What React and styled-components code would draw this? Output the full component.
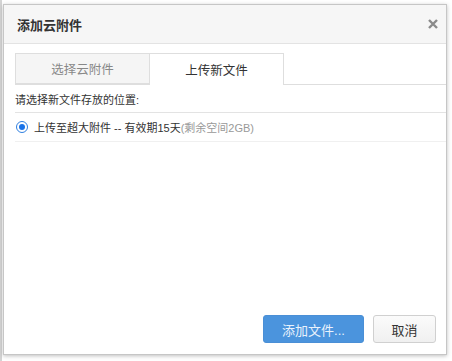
import React from 'react';
import styled, { createGlobalStyle } from 'styled-components';

const GlobalStyle = createGlobalStyle`
  html, body {
    margin: 0;
    padding: 0;
    background: #ffffff;
    font-family: "Liberation Sans", "Noto Sans CJK SC", sans-serif;
  }
`;

const Page = styled.div`
  padding: 4px 5px 6px 1px;
  width: 452px;
  height: 361px;
  box-sizing: border-box;
  border-left: 2px solid #d4d4d4;
`;

const Dialog = styled.div`
  height: 351px;
  box-sizing: border-box;
  border: 1px solid #c6c6c6;
  box-shadow: 0 1px 4px rgba(0, 0, 0, 0.25);
  background: #fff;
  display: flex;
  flex-direction: column;
`;

const Header = styled.div`
  height: 38px;
  background: #f6f6f6;
  border-bottom: 1px solid #e3e3e3;
  display: flex;
  align-items: center;
  justify-content: space-between;
  padding: 0 8px 0 13px;
`;

const Title = styled.div`
  font-size: 13px;
  font-weight: bold;
  color: #333;
`;

const Close = styled.svg`
  width: 10px;
  height: 10px;
  margin-top: -1px;
`;

const Body = styled.div`
  flex: 1;
  padding-top: 9px;
`;

const TabBar = styled.div`
  display: flex;
  margin-left: 11px;
  border-bottom: 1px solid #dedede;
`;

const Tab = styled.div`
  width: ${p => p.$w}px;
  box-sizing: border-box;
  display: flex;
  align-items: center;
  justify-content: center;
  font-size: 12.5px;
  border: 1px solid #dedede;
  border-left: ${p => (p.$first ? '1px solid #dedede' : 'none')};
  background: ${p => (p.$active ? '#fff' : '#f5f5f5')};
  color: ${p => (p.$active ? '#333' : '#888')};
  margin-bottom: ${p => (p.$active ? '-1px' : '0')};
  height: ${p => (p.$active ? '32px' : '31px')};
  border-bottom: ${p => (p.$active ? 'none' : '1px solid #dedede')};
`;

const Content = styled.div`
  margin-left: 11px;
`;

const Label = styled.div`
  font-size: 11px;
  color: #333;
  height: 27px;
  line-height: 31px;
  border-bottom: 1px solid #e3e3e3;
`;

const OptionRow = styled.label`
  display: flex;
  align-items: center;
  height: 28px;
  font-size: 11px;
  color: #333;
  border-bottom: 1px solid #f0f0f0;
`;

const Radio = styled.span`
  width: 12px;
  height: 12px;
  box-sizing: border-box;
  border-radius: 50%;
  border: 1px solid #2f7fe0;
  margin: 0 6px 0 1px;
  display: flex;
  align-items: center;
  justify-content: center;
  &::after {
    content: '';
    width: 6px;
    height: 6px;
    border-radius: 50%;
    background: #1a73e8;
  }
`;

const Muted = styled.span`
  color: #999;
`;

const Footer = styled.div`
  display: flex;
  justify-content: flex-end;
  gap: 9px;
  padding: 0 10px 11px 0;
`;

const Button = styled.button`
  height: 28px;
  box-sizing: border-box;
  padding: 0;
  width: ${p => p.$w}px;
  font-family: inherit;
  font-size: 13px;
  border-radius: 3px;
  border: 1px solid ${p => (p.$primary ? '#4a8fd6' : '#d0d0d0')};
  background: ${p => (p.$primary ? '#4b94dd' : 'linear-gradient(#fbfbfb, #f0f0f0)')};
  color: ${p => (p.$primary ? '#e9f2fc' : '#333')};
`;

export default function App() {
  return (
    <Page>
      <GlobalStyle />
      <Dialog>
        <Header>
          <Title>添加云附件</Title>
          <Close viewBox="0 0 10 10">
            <path d="M1 1L9 9M9 1L1 9" stroke="#8a8a8a" strokeWidth="2.4" />
          </Close>
        </Header>
        <Body>
          <TabBar>
            <Tab $w={135} $first>选择云附件</Tab>
            <Tab $w={134} $active>上传新文件</Tab>
          </TabBar>
          <Content>
            <Label>请选择新文件存放的位置:</Label>
            <OptionRow>
              <Radio />
              上传至超大附件 -- 有效期15天<Muted>(剩余空间2GB)</Muted>
            </OptionRow>
          </Content>
        </Body>
        <Footer>
          <Button $w={101} $primary>添加文件...</Button>
          <Button $w={63}>取消</Button>
        </Footer>
      </Dialog>
    </Page>
  );
}
